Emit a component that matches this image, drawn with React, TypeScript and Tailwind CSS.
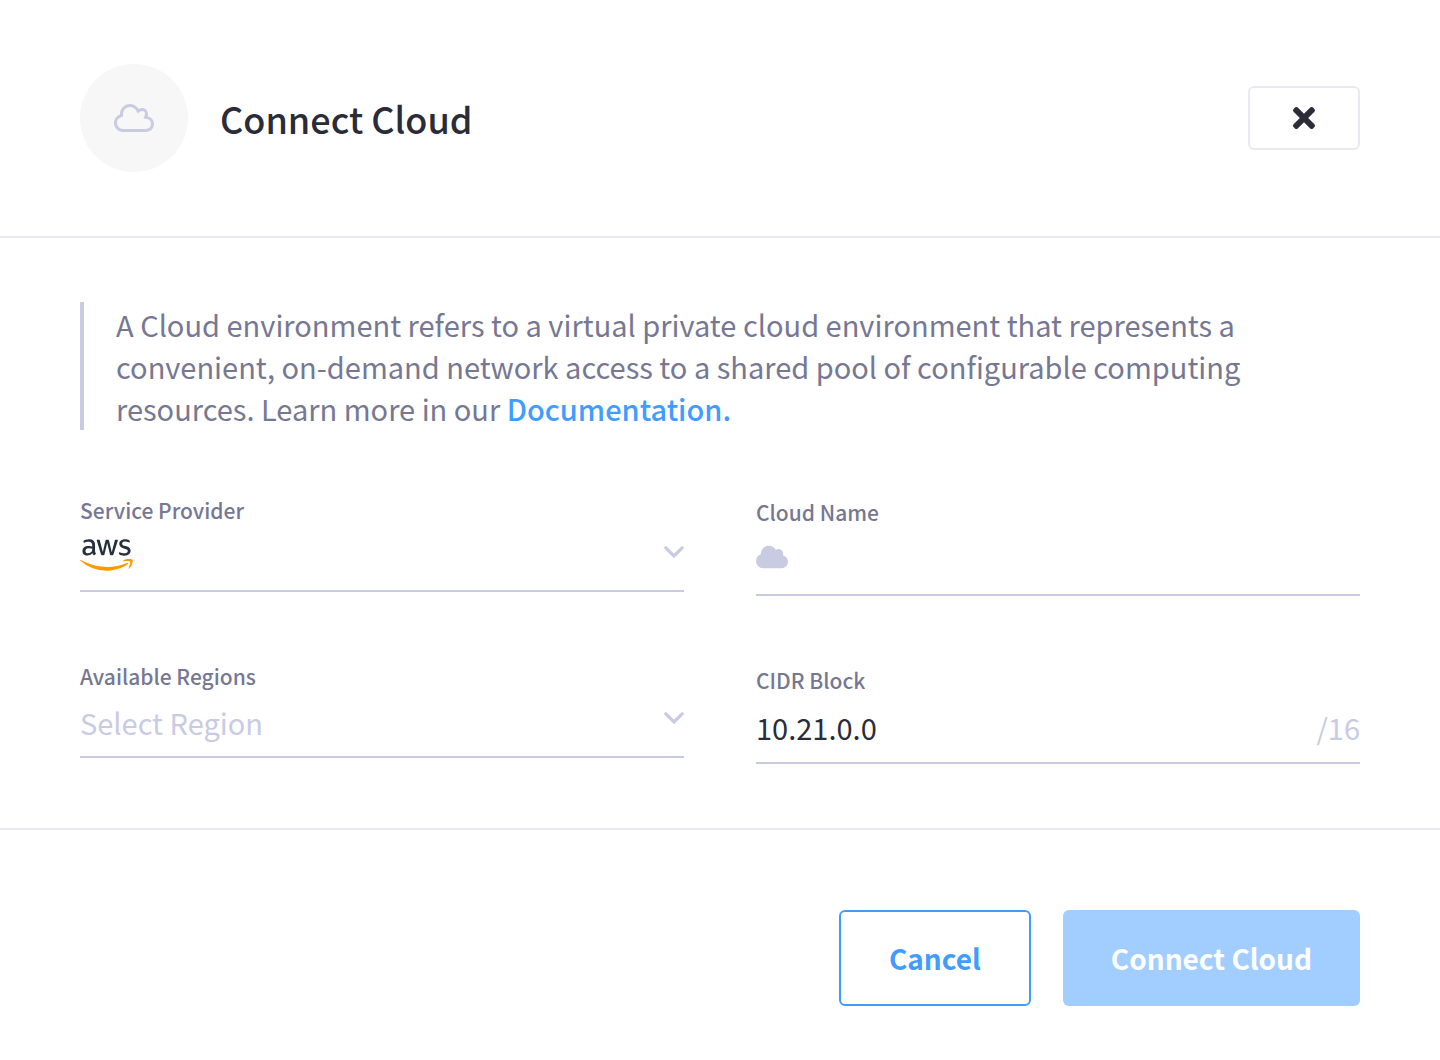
import { useState } from 'react';
import type { ReactNode } from 'react';
import { FaAws, FaCloud, FaTimes } from 'react-icons/fa';

const CLOUD_PATH =
  'M537.6 226.6c4.1-10.7 6.4-22.4 6.4-34.6 0-53-43-96-96-96-19.7 0-38.1 6-53.3 16.2C367 64.2 315.3 32 256 32c-88.4 0-160 71.6-160 160 0 2.7.1 5.4.2 8.1C40.2 219.8 0 273.2 0 336c0 79.5 64.5 144 144 144h368c70.7 0 128-57.3 128-128 0-61.9-44-113.6-102.4-125.4z';

function CloudOutline() {
  return (
    <svg viewBox="0 0 640 512" className="h-8 w-10 text-[#c9cbe3]" aria-hidden="true">
      <clipPath id="cloud-inside">
        <path d={CLOUD_PATH} />
      </clipPath>
      <path d={CLOUD_PATH} fill="none" stroke="currentColor" strokeWidth="96" clipPath="url(#cloud-inside)" />
    </svg>
  );
}

function Chevron() {
  return (
    <svg viewBox="0 0 20 12" className="pointer-events-none absolute right-0 top-3 h-3 w-5" aria-hidden="true">
      <path d="M1.8 1.8 10 10l8.2-8.2" fill="none" stroke="#c9cbe3" strokeWidth="3.2" strokeLinecap="round" />
    </svg>
  );
}

function AwsLogo() {
  return (
    <span className="pointer-events-none absolute left-0 top-0">
      <svg width="0" height="0" className="absolute" aria-hidden="true">
        <linearGradient id="aws-fill" gradientUnits="userSpaceOnUse" x1="0" y1="0" x2="0" y2="512">
          <stop offset="0.6" stopColor="#252f3e" />
          <stop offset="0.6" stopColor="#ff9900" />
        </linearGradient>
      </svg>
      <FaAws fill="url(#aws-fill)" className="h-[42px] w-[53px]" aria-hidden="true" />
    </span>
  );
}

function Field({ id, label, children }: { id: string; label: string; children: ReactNode }) {
  return (
    <div>
      <label htmlFor={id} className="block text-[21px] font-medium leading-8 text-[#767893]">
        {label}
      </label>
      {children}
    </div>
  );
}

export default function App() {
  const [provider, setProvider] = useState('aws');
  const [region, setRegion] = useState('');
  const [name, setName] = useState('');
  const [cidr, setCidr] = useState('10.21.0.0');

  return (
    <main className="min-h-screen bg-white font-['Noto_Sans_CJK_SC',sans-serif] text-[#2a2c38]">
      <header className="flex items-center gap-8 border-b-2 border-[#e9e9f1] px-20 py-16">
        <div className="flex size-27 items-center justify-center rounded-full bg-[#f7f7f7]">
          <CloudOutline />
        </div>
        <h1 className="flex-1 text-[36px] font-medium leading-12">Connect Cloud</h1>
        <button
          type="button"
          aria-label="Close"
          className="flex h-16 w-28 items-center justify-center rounded-md border-2 border-[#e9e9f1]"
        >
          <FaTimes className="h-8 w-[22px]" aria-hidden="true" />
        </button>
      </header>

      <form>
        <div className="px-20 py-16">
          <p className="border-l-4 border-[#c9cbe3] py-px pl-8 pr-24 text-[29px] leading-[42px] text-[#767893]">
            A Cloud environment refers to a virtual private cloud environment that represents a convenient,
            on-demand network access to a shared pool of configurable computing resources. Learn more in our{' '}
            <a href="#documentation" className="font-medium text-[#419dfd]">
              Documentation.
            </a>
          </p>

          <div className="mt-16 grid grid-cols-2 gap-x-18">
            <div className="flex flex-col gap-17">
              <Field id="provider" label="Service Provider">
                <div className="relative mt-2 border-b-2 border-[#c9cbe3]">
                  <select
                    id="provider"
                    value={provider}
                    onChange={(e) => setProvider(e.target.value)}
                    className="block h-14 w-full appearance-none bg-transparent outline-none"
                  >
                    <option value="aws" aria-label="aws"></option>
                  </select>
                  <AwsLogo />
                  <Chevron />
                </div>
              </Field>
              <Field id="region" label="Available Regions">
                <div className="relative mt-2 border-b-2 border-[#c9cbe3]">
                  <select
                    id="region"
                    value={region}
                    onChange={(e) => setRegion(e.target.value)}
                    className="block h-14 w-full appearance-none bg-transparent pb-3 text-[29px] leading-[42px] text-[#c9cbe3] outline-none"
                  >
                    <option value="">Select Region</option>
                  </select>
                  <Chevron />
                </div>
              </Field>
            </div>
            <div className="flex flex-col gap-17 pt-0.5">
              <Field id="name" label="Cloud Name">
                <div className="mt-2 flex h-15 items-center gap-4 border-b-2 border-[#c9cbe3] pb-4">
                  <FaCloud className="h-[26px] w-8 text-[#c9cbe3]" aria-hidden="true" />
                  <input
                    id="name"
                    value={name}
                    onChange={(e) => setName(e.target.value)}
                    className="min-w-0 flex-1 text-[29px] leading-[42px] outline-none"
                  />
                </div>
              </Field>
              <Field id="cidr" label="CIDR Block">
                <div className="mt-2 flex h-15 items-center border-b-2 border-[#c9cbe3] pb-3">
                  <input
                    id="cidr"
                    value={cidr}
                    onChange={(e) => setCidr(e.target.value)}
                    className="min-w-0 flex-1 text-[29px] leading-[42px] outline-none"
                  />
                  <span className="text-[29px] leading-[42px] text-[#c9cbe3]">/16</span>
                </div>
              </Field>
            </div>
          </div>
        </div>

        <footer className="flex justify-end gap-8 border-t-2 border-[#e9e9f1] px-20 pb-14 pt-20">
          <button
            type="button"
            className="h-24 rounded-md border-2 border-[#419dfd] px-12 text-[28px] font-bold text-[#419dfd]"
          >
            Cancel
          </button>
          <button type="submit" disabled className="h-24 rounded-md bg-[#a2ceff] px-12 text-[28px] font-bold text-white">
            Connect Cloud
          </button>
        </footer>
      </form>
    </main>
  );
}
